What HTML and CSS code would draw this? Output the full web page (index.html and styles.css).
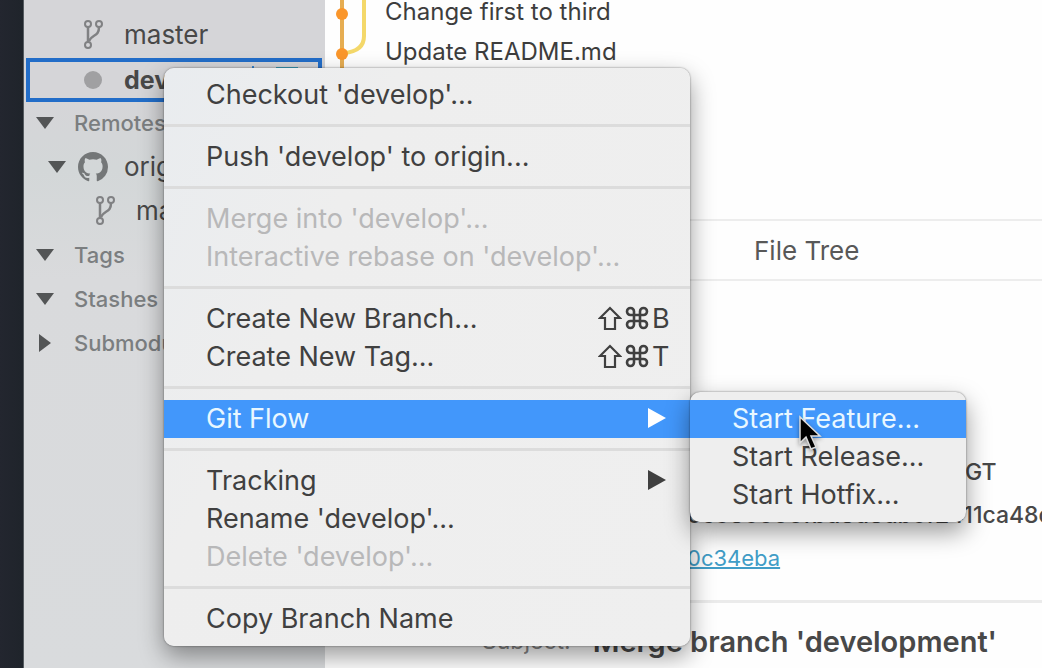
FILE: index.html
```html
<!DOCTYPE html>
<html lang="en">
<head>
<meta charset="utf-8">
<title>Repository</title>
<link rel="stylesheet" href="styles.css">
</head>
<body>
<svg class="defs" aria-hidden="true">
  <symbol id="branch" viewBox="0 0 22 30">
    <g fill="none" stroke="currentColor" stroke-width="2"><circle cx="5" cy="4" r="3"/><circle cx="16" cy="4" r="3"/><circle cx="5" cy="25" r="3"/><path stroke-width="2.500" d="M5 7v15M16 7c0 10-7 7-10 14"/></g>
  </symbol>
  <symbol id="down" viewBox="0 0 18 12"><path fill="currentColor" d="M0 0h18L9 12z"/></symbol>
  <symbol id="right" viewBox="0 0 12 18"><path fill="currentColor" d="M0 0l12 9-12 9z"/></symbol>
  <symbol id="arrow" viewBox="0 0 18 20"><path fill="currentColor" d="M0 0l18 10-18 10z"/></symbol>
  <symbol id="shift" viewBox="0 0 24 24"><path fill="none" stroke="currentColor" stroke-width="2.200" d="M12 2L2 12h5v11h10V12h5z"/></symbol>
  <symbol id="command" viewBox="0 0 24 24"><path fill="none" stroke="currentColor" stroke-width="2.600" d="M9 9V5.500A3.500 3.500 0 1 0 5.500 9h13A3.500 3.500 0 1 0 15 5.500v13a3.500 3.500 0 1 0 3.500-3.500h-13A3.500 3.500 0 1 0 9 18.500z"/></symbol>
</svg>
<div class="app">
  <div class="rail"></div>
  <nav class="sidebar">
    <div class="row leaf"><svg class="branch"><use href="#branch"/></svg><span>master</span></div>
    <div class="row leaf selected"><i class="dot"></i><span>develop</span><i class="ahead"></i><i class="badge"></i></div>
    <div class="row group"><svg class="down"><use href="#down"/></svg><span>Remotes</span></div>
    <div class="row remote"><svg class="down"><use href="#down"/></svg><svg class="github" viewBox="0 0 16 16"><path fill="currentColor" d="M8 0C3.580 0 0 3.580 0 8c0 3.540 2.290 6.530 5.470 7.590.4.070.55-.17.55-.38 0-.19-.01-.82-.01-1.490-2.010.37-2.530-.49-2.690-.94-.09-.23-.48-.94-.82-1.130-.28-.15-.68-.52-.01-.53.63-.01 1.080.58 1.230.82.72 1.210 1.870.87 2.330.66.07-.52.28-.87.51-1.070-1.780-.2-3.640-.89-3.640-3.950 0-.87.31-1.590.82-2.150-.08-.2-.36-1.020.08-2.120 0 0 .67-.21 2.200.82.64-.18 1.320-.27 2-.27s1.360.09 2 .27c1.530-1.040 2.200-.82 2.200-.82.44 1.100.16 1.920.08 2.120.51.56.82 1.270.82 2.150 0 3.070-1.870 3.750-3.650 3.950.29.25.54.73.54 1.480 0 1.070-.01 1.930-.01 2.200 0 .21.15.46.55.38A8.010 8.010 0 0 0 16 8c0-4.420-3.580-8-8-8z"/></svg><span>origin</span></div>
    <div class="row leaf nested"><svg class="branch"><use href="#branch"/></svg><span>master</span></div>
    <div class="row group"><svg class="down"><use href="#down"/></svg><span>Tags</span></div>
    <div class="row group"><svg class="down"><use href="#down"/></svg><span>Stashes</span></div>
    <div class="row group"><svg class="right"><use href="#right"/></svg><span>Submodules</span></div>
  </nav>
  <main class="main">
    <section class="history">
      <svg class="graph" viewBox="0 0 60 80"><g fill="none"><path stroke="#e6ad52" stroke-width="4" d="M17 0v80"/><path stroke="#f4d86a" stroke-width="4" d="M39 0v36c0 11-8 16-20 17"/></g><g fill="#fa962b"><circle cx="17" cy="14" r="6"/><circle cx="17" cy="54" r="6"/></g></svg>
      <div class="commits"><div class="commit">Change first to third</div><div class="commit">Update README.md</div></div>
    </section>
    <div class="tabs"><button class="tab">File Tree</button></div>
    <section class="details">
      <div class="detail zone">GT</div>
      <div class="detail hash">0c386000fbd8d8db6f2411ca48c</div>
      <div class="detail parent"><a href="#parent">0c34eba</a></div>
    </section>
    <section class="message"><span class="label">Subject:</span><strong>Merge branch 'development'</strong></section>
  </main>
</div>
<div class="menu context" role="menu">
  <button class="item">Checkout 'develop'...</button>
  <hr>
  <button class="item">Push 'develop' to origin...</button>
  <hr>
  <button class="item" disabled>Merge into 'develop'...</button>
  <button class="item" disabled>Interactive rebase on 'develop'...</button>
  <hr>
  <button class="item">Create New Branch...<span class="keys"><svg><use href="#shift"/></svg><svg><use href="#command"/></svg><span class="key">B</span></span></button>
  <button class="item">Create New Tag...<span class="keys"><svg><use href="#shift"/></svg><svg><use href="#command"/></svg><span class="key">T</span></span></button>
  <hr>
  <div class="parent-item">
    <button class="item active">Git Flow<svg class="arrow"><use href="#arrow"/></svg></button>
    <div class="menu submenu" role="menu">
      <button class="item active">Start Feature...</button>
      <button class="item">Start Release...</button>
      <button class="item">Start Hotfix...</button>
      <svg class="cursor" viewBox="0 0 24 36"><path fill="#000" stroke="#ddd" stroke-width="1.500" d="M2 2v26l6-6 5 12 5-2-5-11h9z"/></svg>
    </div>
  </div>
  <hr>
  <button class="item">Tracking<svg class="arrow"><use href="#arrow"/></svg></button>
  <button class="item">Rename 'develop'...</button>
  <button class="item" disabled>Delete 'develop'...</button>
  <hr>
  <button class="item">Copy Branch Name</button>
</div>
</body>
</html>
```
FILE: styles.css
```css
* { box-sizing: border-box; }
body { margin: 0; font-family: Inter, "Liberation Sans", sans-serif; color: #484848; overflow: hidden; }
button { font: inherit; color: inherit; border: 0; background: none; padding: 0; text-align: left; }
svg { display: block; flex: none; }
.defs { position: absolute; width: 0; height: 0; }
.app { display: flex; min-height: 100vh; background: #fefefe; }
.rail { width: 24px; flex: none; background: linear-gradient(90deg, #23262f, #1f242b); border-right: 1px solid #555b60; }
.sidebar { width: 301px; flex: none; padding-top: 13px; background: linear-gradient(#d5d5d8 100px, #d3d7d8 170px, #d9dadc 280px, #d9dbdd); }
.row { display: flex; align-items: center; height: 44px; padding-bottom: 1px; font-size: 26px; white-space: nowrap; overflow: hidden; }
.group { padding-left: 12px; gap: 20px; font-size: 22px; font-weight: 500; color: #7b7e80; }
.down { width: 18px; height: 12px; color: #535556; }
.right { width: 12px; height: 18px; margin: 0 3px; color: #535556; }
.leaf { padding-left: 59px; gap: 19px; }
.branch { width: 22px; height: 30px; color: #808183; }
.nested { padding-left: 71px; }
.remote { padding-left: 24px; gap: 12px; }
.github { width: 30px; height: 30px; color: #747778; margin-right: 4px; }
.selected { margin: 1px 3px -1px 2px; padding-left: 54px; border: 4px solid #226dc8; font-weight: 700; font-size: 25px; }
.selected span { width: 109px; }
.dot { width: 18px; height: 18px; margin-right: 3px; border-radius: 50%; background: #a0a0a2; }
.ahead { width: 2px; height: 28px; background: #3a86cf; }
.badge { width: 22px; height: 26px; margin-left: 3px; background: #3d9dba; }
.main { flex: 1; min-width: 0; }
.history { display: flex; height: 219px; overflow: hidden; }
.graph { width: 60px; height: 80px; }
.commits { display: flex; flex-direction: column; justify-content: flex-end; height: 72px; }
.commit { height: 40px; line-height: 40px; flex: none; font-size: 24px; white-space: nowrap; color: #3d3d3d; }
.tabs { display: flex; height: 62px; border: solid #ededed; border-width: 2px 0; padding-left: 429px; }
.tab { font-size: 26px; color: #585858; white-space: nowrap; }
.details { padding-top: 170px; height: 322px; border-bottom: 3px solid #ebebeb; overflow: hidden; }
.detail { height: 43px; line-height: 43px; font-size: 23px; font-weight: 500; white-space: nowrap; }
.zone { padding-left: 640px; }
.hash { padding-left: 362px; }
.parent { padding-left: 362px; font-size: 22px; font-weight: 400; }
.parent a { color: #419dc7; text-decoration-thickness: 2px; }
.message { display: flex; align-items: center; gap: 22px; height: 76px; padding-left: 157px; font-size: 23px; color: #888; white-space: nowrap; }
.message strong { font-size: 29px; font-weight: 600; color: #484848; }
.menu { position: absolute; display: flex; flex-direction: column; padding: 8px 0; background: #eee; border-radius: 10px; font-size: 27px; color: #404040; box-shadow: 0 0 2px #0008, 0 10px 24px #0006; }
.context { left: 164px; top: 68px; width: 526px; background: linear-gradient(115deg, #e9ecef, #eee 30%, #efefef); }
.item { display: flex; align-items: center; width: 100%; height: 38px; padding: 0 20px 2px 42px; white-space: nowrap; }
.item:disabled { color: #b8b8b9; }
.active { background: #4297fb; color: #e9f7ff; }
.menu hr { width: 100%; height: 3px; margin: 10px 0 11px; border: 0; background: #dcdcdc; }
.keys { display: flex; align-items: center; gap: 3px; margin-left: auto; }
.keys svg { width: 24px; height: 24px; }
.key { width: 18px; }
.arrow { width: 18px; height: 20px; margin: 0 4px 0 auto; }
.active .arrow { color: #fff; }
.parent-item { position: relative; }
.submenu { left: 100%; top: -8px; width: 276px; }
.cursor { position: absolute; left: 108px; top: 23px; width: 24px; height: 36px; filter: drop-shadow(0 2px 2px #0006); }
```
